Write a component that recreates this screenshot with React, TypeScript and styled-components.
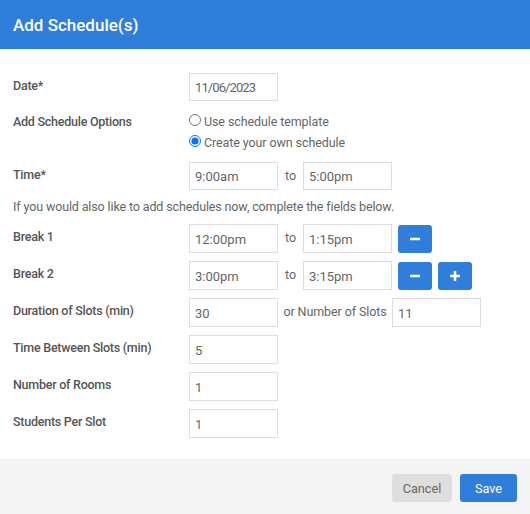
import styled, { createGlobalStyle } from 'styled-components';

const GlobalStyle = createGlobalStyle`
  html, body {
    margin: 0;
    padding: 0;
    background: #fff;
  }
  body {
    font-family: 'Roboto', 'Noto Sans', sans-serif;
    color: #555;
  }
`;

const Modal = styled.div`
  display: flex;
  flex-direction: column;
  width: 530px;
  height: 514px;
  overflow: hidden;
`;

const Header = styled.header`
  display: flex;
  align-items: center;
  height: 49px;
  padding: 0 13px;
  background: #2f7edb;
`;

const Title = styled.h1`
  margin: 0;
  font-size: 17px;
  font-weight: 500;
  color: #fff;
`;

const Body = styled.div`
  flex: 1;
  display: flex;
  flex-direction: column;
  gap: 8px;
  padding: 24px 13px 0;
`;

const Row = styled.div`
  display: flex;
  align-items: flex-start;
`;

const Label = styled.label`
  width: 176px;
  flex: none;
  padding-top: 5px;
  font-size: 12.5px;
  font-weight: 500;
  letter-spacing: -0.25px;
  line-height: 16px;
  color: #555;
`;

const Field = styled.input<{ $short?: boolean; $date?: boolean }>`
  box-sizing: border-box;
  width: 89px;
  height: ${(p) => (p.$short ? '28px' : '29px')};
  padding: 1px 5px 0;
  border: 1px solid #ddd;
  border-radius: 0;
  outline: none;
  background: #fff;
  font-family: inherit;
  font-size: 13px;
  letter-spacing: ${(p) => (p.$date ? '-0.9px' : '0')};
  color: #666;
`;

const Joiner = styled.span<{ $wide?: boolean }>`
  flex: none;
  width: ${(p) => (p.$wide ? '114px' : '25px')};
  padding-bottom: 2px;
  font-size: 12.5px;
  letter-spacing: -0.1px;
  text-align: center;
  color: #666;
`;

const Inline = styled.div`
  display: flex;
  align-items: center;
`;

const Options = styled.div`
  display: flex;
  flex-direction: column;
  gap: 4px;
  height: 45px;
  padding-top: 4px;
  box-sizing: border-box;
`;

const Option = styled.label`
  display: flex;
  align-items: center;
  gap: 3px;
  height: 17px;
  font-size: 12.5px;
  letter-spacing: -0.1px;
  color: #666;
`;

const Radio = styled.input`
  width: 12px;
  height: 12px;
  margin: 0 0 3px;
  accent-color: #0075ff;
`;

const Hint = styled.p`
  margin: 0;
  font-size: 12.5px;
  letter-spacing: -0.13px;
  line-height: 18px;
  color: #666;
`;

const IconButton = styled.button`
  display: flex;
  align-items: center;
  justify-content: center;
  width: 34px;
  height: 28px;
  margin-left: 6px;
  padding: 0;
  border: 0;
  border-radius: 3px;
  background: #2f7edb;
  color: #fff;
`;

const Actions = styled.div`
  display: flex;
`;

const Footer = styled.footer`
  box-sizing: border-box;
  display: flex;
  justify-content: flex-end;
  gap: 8px;
  height: 55px;
  padding: 14px 13px 0;
  border-top: 1px solid #efefef;
  background: #f4f4f4;
`;

const FooterButton = styled.button<{ $primary?: boolean }>`
  height: 28px;
  padding: 0;
  width: ${(p) => (p.$primary ? '57px' : '60px')};
  border: 0;
  border-radius: 3px;
  background: ${(p) => (p.$primary ? '#2f7edb' : '#dedede')};
  color: ${(p) => (p.$primary ? '#fff' : '#666')};
  font-family: inherit;
  font-size: 12.7px;
`;

const Minus = () => (
  <svg width="10" height="10" viewBox="0 0 10 10">
    <rect x="0" y="3.7" width="10" height="2.6" rx="0.5" fill="currentColor" />
  </svg>
);

const Plus = () => (
  <svg width="10" height="10" viewBox="0 0 10 10">
    <rect x="0" y="3.7" width="10" height="2.6" rx="0.5" fill="currentColor" />
    <rect x="3.7" y="0" width="2.6" height="10" rx="0.5" fill="currentColor" />
  </svg>
);

export default function App() {
  return (
    <Modal>
      <GlobalStyle />
      <Header>
        <Title>Add Schedule(s)</Title>
      </Header>
      <Body>
        <Row>
          <Label>Date*</Label>
          <Field $short $date defaultValue="11/06/2023" />
        </Row>
        <Row>
          <Label>Add Schedule Options</Label>
          <Options>
            <Option>
              <Radio type="radio" name="mode" />
              Use schedule template
            </Option>
            <Option>
              <Radio type="radio" name="mode" defaultChecked />
              Create your own schedule
            </Option>
          </Options>
        </Row>
        <Row>
          <Label>Time*</Label>
          <Inline>
            <Field $short defaultValue="9:00am" />
            <Joiner>to</Joiner>
            <Field $short defaultValue="5:00pm" />
          </Inline>
        </Row>
        <Hint>If you would also like to add schedules now, complete the fields below.</Hint>
        <Row>
          <Label>Break 1</Label>
          <Inline>
            <Field defaultValue="12:00pm" />
            <Joiner>to</Joiner>
            <Field defaultValue="1:15pm" />
            <IconButton aria-label="Remove break"><Minus /></IconButton>
          </Inline>
        </Row>
        <Row>
          <Label>Break 2</Label>
          <Inline>
            <Field defaultValue="3:00pm" />
            <Joiner>to</Joiner>
            <Field defaultValue="3:15pm" />
            <Actions>
              <IconButton aria-label="Remove break"><Minus /></IconButton>
              <IconButton aria-label="Add break"><Plus /></IconButton>
            </Actions>
          </Inline>
        </Row>
        <Row>
          <Label>Duration of Slots (min)</Label>
          <Inline>
            <Field defaultValue="30" />
            <Joiner $wide>or Number of Slots</Joiner>
            <Field defaultValue="11" />
          </Inline>
        </Row>
        <Row>
          <Label>Time Between Slots (min)</Label>
          <Field defaultValue="5" />
        </Row>
        <Row>
          <Label>Number of Rooms</Label>
          <Field defaultValue="1" />
        </Row>
        <Row>
          <Label>Students Per Slot</Label>
          <Field defaultValue="1" />
        </Row>
      </Body>
      <Footer>
        <FooterButton>Cancel</FooterButton>
        <FooterButton $primary>Save</FooterButton>
      </Footer>
    </Modal>
  );
}
